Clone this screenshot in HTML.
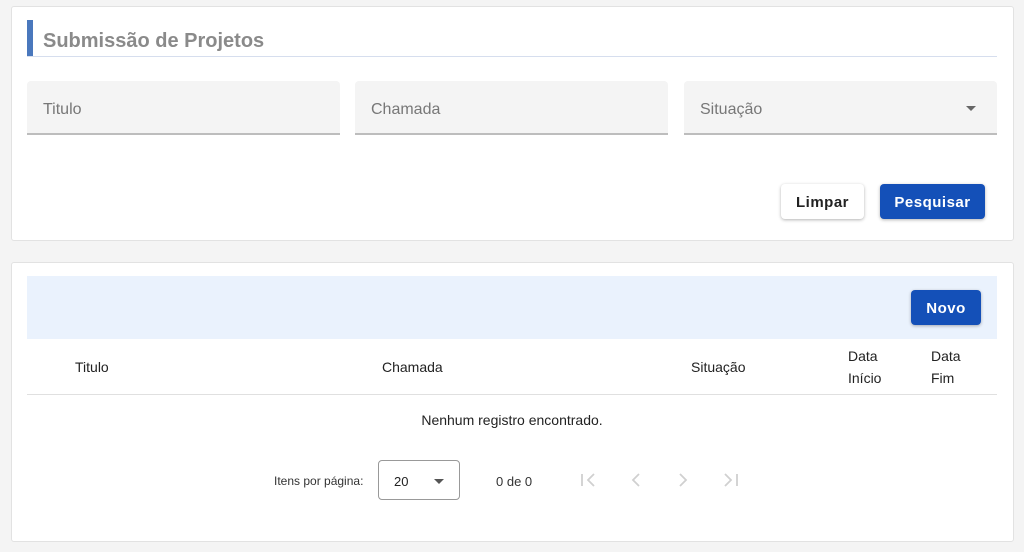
<!DOCTYPE html>
<html><head><meta charset="utf-8"><style>
*{box-sizing:border-box;margin:0;padding:0}
body{width:1024px;height:552px;background:#f4f4f4;font-family:"Liberation Sans",sans-serif;position:relative;overflow:hidden;color:#222}
.a{position:absolute}
.card{position:absolute;background:#fff;border:1px solid #e2e2e2;border-radius:3px}
.inp{position:absolute;top:81px;height:54px;background:#f4f4f4;border-bottom:2px solid #bdbdbd;border-radius:4px 4px 0 0;font-size:16px;color:#777;padding:20px 0 0 16px}
.btn{position:absolute;border-radius:4px;font-size:15px;font-weight:bold;text-align:center;box-shadow:0 1px 3px rgba(0,0,0,.3);letter-spacing:.5px}
.blue{background:#1450b8;color:#fff}
.th{position:absolute;font-size:14px;color:#222;line-height:22px}
</style></head><body>
<div class="card" style="left:11px;top:6px;width:1003px;height:235px"></div>
<div class="a" style="left:27px;top:20px;width:6px;height:36px;background:#4a78bd"></div>
<div class="a" style="left:27px;top:56px;width:970px;height:1px;background:#d6deee"></div>
<div class="a" style="left:43px;top:30px;font-size:20px;font-weight:bold;color:#8a8a8a">Submissão de Projetos</div>
<div class="inp" style="left:27px;width:313px">Titulo</div>
<div class="inp" style="left:355px;width:313px">Chamada</div>
<div class="inp" style="left:684px;width:313px">Situação</div>
<div class="a" style="left:966px;top:106px;border-left:5px solid transparent;border-right:5px solid transparent;border-top:5px solid #666"></div>
<div class="btn" style="left:781px;top:184px;width:83px;height:35px;line-height:38px;background:#fff;color:#222">Limpar</div>
<div class="btn blue" style="left:880px;top:184px;width:105px;height:35px;line-height:38px">Pesquisar</div>

<div class="card" style="left:11px;top:262px;width:1003px;height:280px"></div>
<div class="a" style="left:27px;top:276px;width:970px;height:63px;background:#eaf2fd"></div>
<div class="btn blue" style="left:911px;top:290px;width:70px;height:35px;line-height:37px">Novo</div>
<div class="th" style="left:75px;top:356px">Titulo</div>
<div class="th" style="left:382px;top:356px">Chamada</div>
<div class="th" style="left:691px;top:356px">Situação</div>
<div class="th" style="left:848px;top:345px">Data<br>Início</div>
<div class="th" style="left:931px;top:345px">Data<br>Fim</div>
<div class="a" style="left:27px;top:394px;width:970px;height:1px;background:#e0e0e0"></div>
<div class="a" style="left:0;width:1024px;top:412px;text-align:center;font-size:14px;color:#222">Nenhum registro encontrado.</div>
<div class="a" style="left:274px;top:474px;font-size:12px;color:#333">Itens por página:</div>
<div class="a" style="left:378px;top:460px;width:82px;height:40px;border:1px solid #999;border-radius:4px;font-size:13px;padding:13px 0 0 15px;color:#222">20</div>
<div class="a" style="left:434px;top:479px;border-left:5px solid transparent;border-right:5px solid transparent;border-top:5px solid #555"></div>
<div class="a" style="left:496px;top:474px;font-size:13px;color:#333">0 de 0</div>
<svg class="a" style="left:576px;top:468px" width="170" height="24" viewBox="0 0 170 24" fill="none" stroke="#d0d0d0" stroke-width="1.8">
<path d="M6 6v12M18 6l-6 6 6 6"/>
<path d="M63 6l-6 6 6 6"/>
<path d="M104 6l6 6-6 6"/>
<path d="M149 6l6 6-6 6M161 6v12"/>
</svg>
</body></html>
